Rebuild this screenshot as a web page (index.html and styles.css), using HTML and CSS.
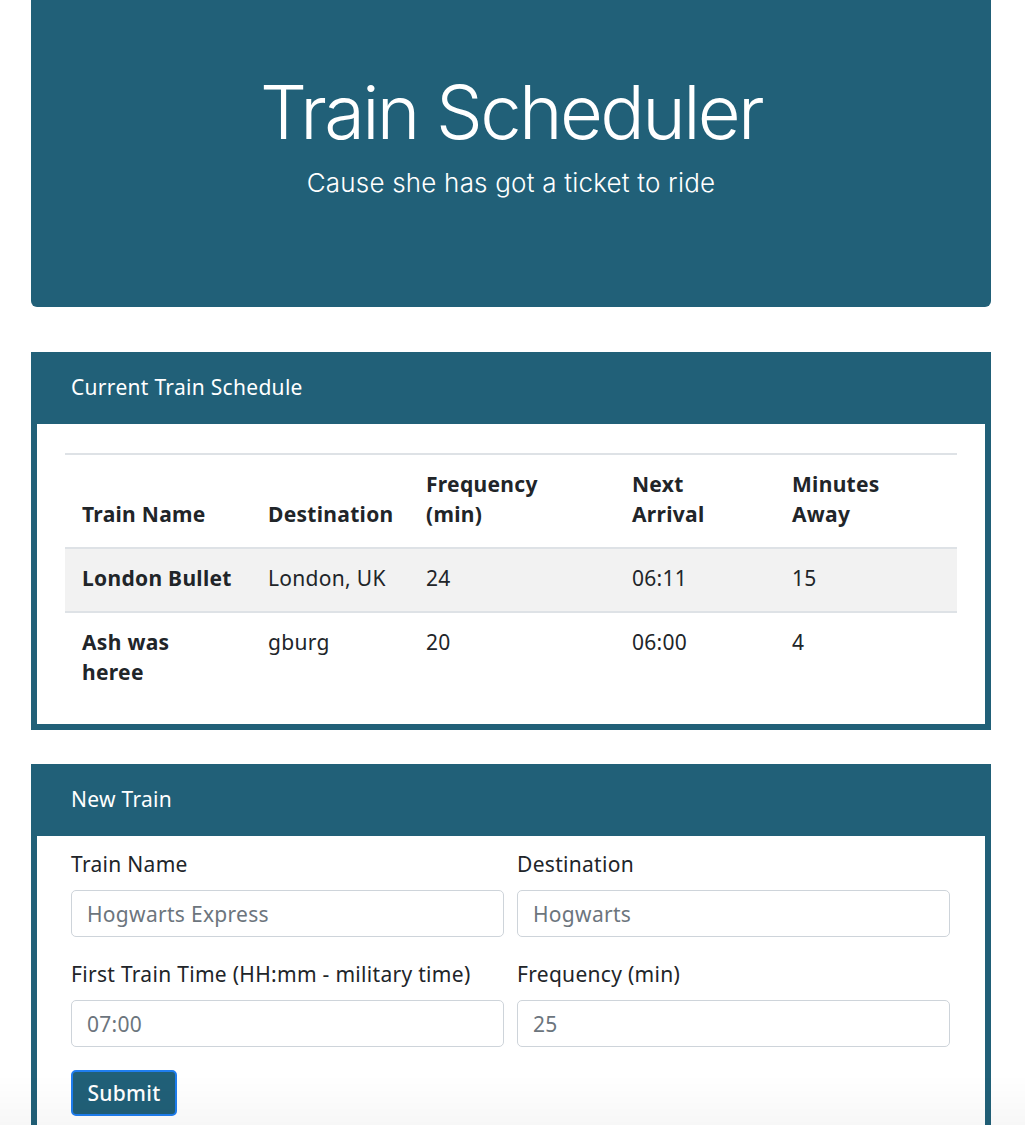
FILE: index.html
```html
<!DOCTYPE html>
<html lang="en">
<head>
<meta charset="utf-8">
<title>Train Scheduler</title>
<link rel="stylesheet" href="styles.css">
</head>
<body>
<div class="container">
  <header class="jumbotron">
    <h1 class="title">Train Scheduler</h1>
    <p class="lead">Cause she has got a ticket to ride</p>
  </header>

  <section class="card">
    <div class="card-header">Current Train Schedule</div>
    <div class="card-body table-body">
      <table class="schedule">
        <colgroup>
          <col class="w1"><col class="w2"><col class="w3"><col class="w4"><col class="w5">
        </colgroup>
        <thead>
          <tr>
            <th>Train Name</th>
            <th>Destination</th>
            <th>Frequency (min)</th>
            <th>Next Arrival</th>
            <th>Minutes Away</th>
          </tr>
        </thead>
        <tbody>
          <tr class="striped">
            <th>London Bullet</th>
            <td>London, UK</td>
            <td>24</td>
            <td>06:11</td>
            <td>15</td>
          </tr>
          <tr>
            <th>Ash was heree</th>
            <td>gburg</td>
            <td>20</td>
            <td>06:00</td>
            <td>4</td>
          </tr>
        </tbody>
      </table>
    </div>
  </section>

  <section class="card">
    <div class="card-header">New Train</div>
    <form class="card-body form-body">
      <div class="form-grid">
        <div class="group">
          <label class="label" for="name">Train Name</label>
          <input class="input" id="name" type="text" placeholder="Hogwarts Express">
        </div>
        <div class="group">
          <label class="label" for="dest">Destination</label>
          <input class="input" id="dest" type="text" placeholder="Hogwarts">
        </div>
        <div class="group">
          <label class="label" for="first">First Train Time (HH:mm - military time)</label>
          <input class="input" id="first" type="text" placeholder="07:00">
        </div>
        <div class="group">
          <label class="label" for="freq">Frequency (min)</label>
          <input class="input" id="freq" type="text" placeholder="25">
        </div>
      </div>
      <button class="btn" type="button">Submit</button>
    </form>
  </section>
</div>
<div class="bottom-fade"></div>
</body>
</html>
```

FILE: styles.css
```css
* { box-sizing: border-box; }

html, body {
  margin: 0;
  padding: 0;
  background: #ffffff;
}

body {
  font-family: "Noto Sans", "Open Sans", Arial, sans-serif;
  font-size: 21px;
  letter-spacing: 0.3px;
  line-height: 30px;
  color: #212529;
}

.container {
  width: 960px;
  margin: 0 0 0 31px;
}

.jumbotron {
  background: #216078;
  height: 307px;
  border-radius: 0 0 6px 6px;
  color: #ffffff;
  text-align: center;
  padding-top: 67px;
  margin-bottom: 45px;
}

.title {
  font-family: Inter, "Noto Sans", sans-serif;
  font-weight: 300;
  font-size: 74px;
  line-height: 90px;
  letter-spacing: -2.6px;
  margin: 0;
}

.lead {
  font-family: Inter, "Noto Sans", sans-serif;
  font-weight: 300;
  font-size: 26px;
  line-height: 36px;
  letter-spacing: 0.2px;
  margin: 8px 0 0;
}

.card {
  border: 6px solid #216078;
  background: #ffffff;
  margin-bottom: 34px;
}

.card-header {
  background: #216078;
  color: #ffffff;
  height: 72px;
  margin: -6px -6px 0;
  padding: 0 0 2px 40px;
  display: flex;
  align-items: center;
}

.table-body {
  padding: 29px 28px 19px 28px;
}

.schedule {
  width: 100%;
  border-collapse: collapse;
  table-layout: fixed;
}

.w1 { width: 186px; }
.w2 { width: 158px; }
.w3 { width: 206px; }
.w4 { width: 160px; }
.w5 { width: 182px; }

.schedule th,
.schedule td {
  padding: 14px 17px 18px;
  text-align: left;
  vertical-align: top;
  border-top: 2px solid #dee2e6;
}

.schedule thead th {
  vertical-align: bottom;
  border-bottom: 2px solid #dee2e6;
  font-weight: 700;
}

.schedule tbody th {
  font-weight: 700;
}

.schedule tbody tr:first-child th,
.schedule tbody tr:first-child td {
  border-top: 0;
}

.striped {
  background: #f2f2f2;
}

.form-body {
  padding: 13px 35px 40px 34px;
}

.form-grid {
  display: grid;
  grid-template-columns: 1fr 1fr;
  column-gap: 13px;
  row-gap: 22px;
}

.label {
  display: block;
  margin-bottom: 11px;
  line-height: 30px;
}

.input {
  display: block;
  width: 100%;
  height: 47px;
  padding: 0 15px;
  border: 1px solid #ced4da;
  border-radius: 5px;
  font-family: inherit;
  font-size: 21px;
  letter-spacing: 0.3px;
  color: #495057;
  background: #ffffff;
}

.input::placeholder {
  color: #6c757d;
  opacity: 1;
}

.btn {
  margin-top: 23px;
  width: 106px;
  height: 46px;
  background: #216078;
  color: #ffffff;
  border: 2px solid #1f7ef0;
  border-radius: 5px;
  font-family: inherit;
  font-size: 21px;
  font-weight: 500;
  letter-spacing: 0.3px;
  padding: 0;
}

.bottom-fade {
  position: fixed;
  left: 0;
  right: 0;
  bottom: 0;
  height: 50px;
  background: linear-gradient(rgba(0, 0, 0, 0), rgba(0, 0, 0, 0.03));
  pointer-events: none;
}
```
